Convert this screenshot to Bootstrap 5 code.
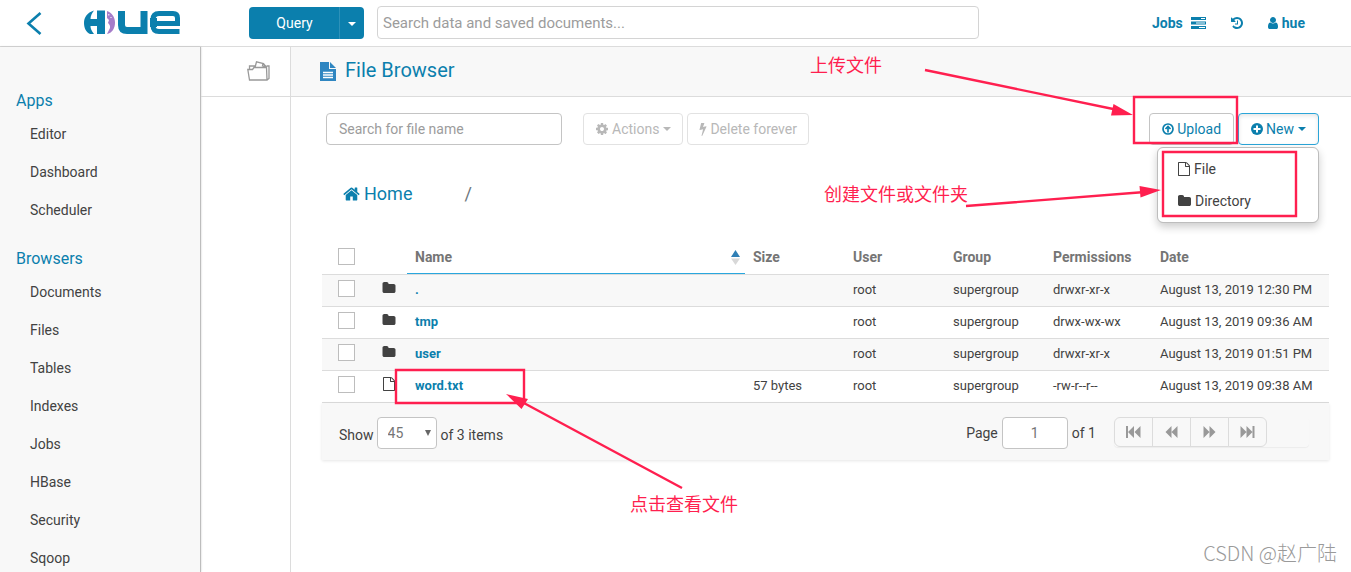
<!DOCTYPE html>
<html lang="en">
<head>
<meta charset="utf-8">
<meta name="viewport" content="width=device-width, initial-scale=1">
<title>Hue - File Browser</title>
<link href="https://cdn.jsdelivr.net/npm/bootstrap@5.3.0/dist/css/bootstrap.min.css" rel="stylesheet">
<style>
  :root { --hue: #0b7fad; --line: #dcdcdc; --soft: #f8f8f8; --ink: #424242; --pin: #ff1f4f; }
  body { font-family: Roboto, "Noto Sans CJK SC", sans-serif; font-size: 14px; line-height: 20px; color: var(--ink); background: #fff; }
  a { color: var(--hue); text-decoration: none; }
  svg { flex: none; }
  .fa { width: 14px; height: 14px; fill: currentColor; }
  .shell { height: 100vh; position: relative; overflow: hidden; }
  .topbar { height: 47px; border-bottom: 1px solid var(--line); padding-right: 46px; }
  .back-link { margin-left: 26px; }
  .brand-link { margin-left: 42px; }
  .query-group { margin-left: 68px; width: 115px; }
  .query-group .btn { background: var(--hue); color: #fff; border: 0; height: 32px; font-size: 14px; line-height: 20px; border-radius: 4px; padding: 0; }
  .query-group .btn + .btn { flex: 0 0 25px; border-left: 1px solid #2d91b9; }
  .form-control, .form-select { font-size: 14px; line-height: 20px; height: 32px; border: 1px solid #c4c4c4; border-radius: 4px; color: #757575; background-color: #fff; }
  .form-control::placeholder { color: #9c9c9c; opacity: 1; }
  .global-search { width: 602px; margin-left: 13px; height: 33px; border-color: #d4d4d4; padding: 0 5px; font-size: 15px; }
  .user-links { font-weight: 700; }
  .side { flex: 0 0 201px; background: var(--soft); border-right: 1px solid #bdbdbd; box-shadow: 0 0 2px rgba(0,0,0,.2); padding-top: 24px; overflow: hidden; }
  .side h2 { font-size: 16px; line-height: 28px; font-weight: 400; color: var(--hue); margin: 16px 0 0; padding-left: 16px; }
  .side .nav-link { color: var(--ink); padding: 0 0 0 30px; line-height: 38px; }
  .assist { flex: 0 0 90px; border-right: 1px solid var(--line); }
  .strip { height: 50px; border-bottom: 1px solid var(--line); }
  .page-title { font-size: 20px; line-height: 24px; font-weight: 400; color: var(--hue); padding: 0 0 3px 28px; background: var(--soft); }
  .toolbar { padding: 16px 32px 0 35px; }
  .file-search { width: 236px; padding: 0 12px; margin-right: 21px; }
  .btn-plain { height: 32px; border: 1px solid #c4c4c4; border-radius: 4px; background: #fff; color: var(--hue); font-size: 14px; line-height: 20px; padding: 0 12px; display: inline-flex; align-items: center; gap: 3px; }
  .btn-plain:disabled { color: #b8b8b8; border-color: #e2e2e2; background: #fff; opacity: 1; padding: 0 11px; }
  .btn-plain.open { border-color: #2ba5d8; box-shadow: inset 0 2px 4px rgba(0,0,0,.1); }
  .dropdown-toggle::after { margin-left: 1px; vertical-align: middle; border-width: 4px 4px 0; }
  .new-menu { width: 162px; min-width: 0; right: 0; top: 34px; padding: 5px 0; font-size: 14px; border: 1px solid #bdbdbd; border-radius: 6px; box-shadow: 0 4px 9px rgba(0,0,0,.2); }
  .new-menu .dropdown-item { padding: 0 20px; line-height: 32px; color: var(--ink); gap: 4px; }
  .crumbs { font-size: 18px; line-height: 26px; padding: 36px 0 0 52px; }
  .files { margin: 33px 22px 0 31px; }
  .grid { table-layout: fixed; margin: 0; color: var(--ink); font-size: 13px; line-height: 20px; }
  .grid th, .grid td { padding: 5px 8px 6px; height: 32px; border-bottom: 1px solid var(--line); background: transparent; box-shadow: none; white-space: nowrap; color: inherit; }
  .grid th { height: 35px; padding: 7px 8px; font-size: 14px; font-weight: 700; color: #757575; }
  .grid tbody tr:nth-child(odd) { background: var(--soft); }
  .grid .pick { padding-left: 16px; }
  .grid th.pick { padding-bottom: 9px; padding-top: 6px; }
  .grid td .fa { display: block; margin: 1px 0 3px; }
  .grid td:nth-child(2) { padding-left: 7px; padding-right: 0; }
  .grid td a { font-weight: 700; }
  .grid .sorted { box-shadow: inset 0 -1px 0 #29a7de; padding-right: 5px; }
  .tick { appearance: none; display: block; width: 17px; height: 17px; margin: 0; border: 1px solid #bdbdbd; background: #fff; }
  .foot { background: var(--soft); padding: 14px 20px 11px 17px; box-shadow: 0 1px 3px rgba(0,0,0,.1); }
  .size-select { width: 60px; padding: 0 10px; appearance: none; background-image: none; }
  .size-box { position: relative; margin: 0 4px 0 3px; }
  .size-box svg { position: absolute; right: 6px; top: 13px; pointer-events: none; }
  .page-input { width: 66px; text-align: center; margin: 0 4px; }
  .pager { width: 195px; margin-left: 18px; box-shadow: 0 1px 1px rgba(0,0,0,.05); border-radius: 4px; }
  .pager .page-link { width: 39px; height: 30px; padding: 0; display: flex; align-items: center; justify-content: center; background: var(--soft); color: #999; border: 1px solid var(--line); }
  .notes { position: absolute; right: 0; top: 0; pointer-events: none; z-index: 2000; font-family: "Noto Sans CJK SC", sans-serif; }
  .watermark { position: absolute; right: 14px; bottom: 5px; font: 20px/28px "Noto Sans CJK SC", sans-serif; font-weight: 300; color: #9a9a9a; text-shadow: -1px -1px 0 #fff; }
</style>
</head>
<body>
<svg class="d-none" xmlns="http://www.w3.org/2000/svg">
  <symbol id="folder" viewBox="0 0 1792 1792"><path d="M1728 608v704q0 92-66 158t-158 66h-1216q-92 0-158-66t-66-158v-960q0-92 66-158t158-66h320q92 0 158 66t66 158v32h672q92 0 158 66t66 158z"/></symbol>
  <symbol id="file" viewBox="0 0 1792 1792"><path d="M1596 380q28 28 48 76t20 88v1152q0 40-28 68t-68 28h-1344q-40 0-68-28t-28-68v-1600q0-40 28-68t68-28h896q40 0 88 20t76 48zm-444-244v376h376q-10-29-22-41l-313-313q-12-12-41-22zm384 1528v-1024h-416q-40 0-68-28t-28-68v-416h-768v1536h1280z"/></symbol>
</svg>
<div class="shell d-flex flex-column">
  <header class="topbar d-flex align-items-center">
    <a href="#" class="back-link d-flex" aria-label="Back"><svg width="16" height="24" viewBox="0 0 16 24" fill="none" stroke="#0b7fad" stroke-width="2.6"><path d="M14.500 2 2.500 12.500 14.500 23"/></svg></a>
    <a href="#" class="brand-link d-flex" aria-label="Hue">
      <svg width="97" height="26" viewBox="0 0 97 26">
        <path fill="#0b7fad" d="M10 .5C3 2.500 0 7.500 0 13c0 5 2 9 6 11h4c-2.500-3-3.500-5.500-3.500-8H13v8h8V.5h-8V9H6.500c0-3 1.500-6 3.500-8.500z"/>
        <path fill="#a57cc9" d="M23 1c5 2 8 6 8 11.500 0 6-3 10.500-8 11.500l2-4c2-3 1-5-1-7l1-3-2-2z"/>
        <path fill="#fff" d="M24.300 4h1v1.500h-1zM26.500 7h1v1h-1z"/>
        <g fill="none" stroke="#0b7fad"><path stroke-width="7" d="M37.500 1v14q0 5.500 5.500 5.500H60V1"/>
        <path stroke-width="5" d="M93 24v-2.500H75q-6 0-6-6V9.500q0-6 6-6h14q4.500 0 4.500 4.500v5.500H69"/><path stroke-width="7" d="M69.500 8v9"/></g>
      </svg>
    </a>
    <div class="query-group btn-group">
      <button class="btn" type="button">Query</button>
      <button class="btn dropdown-toggle" type="button" aria-label="Query type"></button>
    </div>
    <input class="form-control global-search" type="text" aria-label="Search" placeholder="Search data and saved documents...">
    <nav class="user-links ms-auto d-flex align-items-center">
      <a href="#" class="d-flex align-items-center gap-2 me-4">Jobs
        <svg width="15" height="12" viewBox="0 0 15 12"><path fill="#0b7fad" d="M0 0h15v3H0zM0 4.500h15v3H0zM0 9h15v3H0z"/><path stroke="#fff" d="M10 1.500h4M5 6h9M8 10.500h6"/></svg></a>
      <a href="#" class="d-flex me-4" aria-label="History"><svg class="fa" viewBox="0 0 1792 1792"><path d="M1664 896q0 156-61 298t-164 245-245 164-298 61q-172 0-327-72.500t-264-204.500q-7-10-6.500-22.500t8.500-20.500l137-138q10-9 25-9 16 2 23 12 73 95 179 147t225 52q104 0 198.500-40.500t163.500-109.500 109.500-163.500 40.500-198.500-40.500-198.500-109.500-163.500-163.500-109.500-198.500-40.500q-98 0-188 35.500t-160 101.500l137 138q31 30 14 69-17 40-59 40h-448q-26 0-45-19t-19-45v-448q0-42 40-59 39-17 69 14l130 129q107-101 244.500-156.500t284.500-55.500q156 0 298 61t245 164 164 245 61 298zm-640-288v448q0 14-9 23t-23 9h-320q-14 0-23-9t-9-23v-64q0-14 9-23t23-9h224v-352q0-14 9-23t23-9h64q14 0 23 9t9 23z"/></svg></a>
      <a href="#" class="d-flex align-items-center gap-1"><svg width="10" height="14" viewBox="256 0 1280 1792" fill="currentColor"><path d="M1536 1399q0 109-62.500 187t-150.500 78h-854q-88 0-150.500-78t-62.500-187q0-85 8.500-160.500t31.500-152 58.500-131 94-89 134.500-34.500q131 128 313 128t313-128q76 0 134.500 34.500t94 89 58.500 131 31.500 152 8.500 160.500zm-256-887q0 159-112.500 271.500t-271.500 112.500-271.500-112.500-112.500-271.500 112.500-271.500 271.500-112.500 271.500 112.500 112.500 271.500z"/></svg>hue</a>
    </nav>
  </header>
  <div class="d-flex flex-grow-1" style="min-height:0">
    <aside class="side">
      <h2>Apps</h2>
      <nav class="nav flex-column flex-nowrap">
        <a class="nav-link" href="#">Editor</a><a class="nav-link" href="#">Dashboard</a><a class="nav-link" href="#">Scheduler</a>
      </nav>
      <h2>Browsers</h2>
      <nav class="nav flex-column flex-nowrap">
        <a class="nav-link" href="#">Documents</a><a class="nav-link" href="#">Files</a><a class="nav-link" href="#">Tables</a><a class="nav-link" href="#">Indexes</a><a class="nav-link" href="#">Jobs</a><a class="nav-link" href="#">HBase</a><a class="nav-link" href="#">Security</a><a class="nav-link" href="#">Sqoop</a>
      </nav>
    </aside>
    <div class="assist">
      <div class="strip d-flex align-items-center justify-content-end pe-3">
        <a href="#" class="d-flex me-1" aria-label="Documents"><svg width="23" height="20" viewBox="0 0 23 20" fill="none" stroke="#999" stroke-width="1.300"><path d="M2.500 19 .8 8.500h4.700l1.500-2h12.500L20 19zM2.500 8V5h5l1 1.500M20 19l2-1.500V5h-2.500M8 6.500 9.500.8l7 1.700 2.300 2.800-.3 1.200M16 2.500l-.5 2.300 3.200.7"/></svg></a>
      </div>
    </div>
    <main class="flex-grow-1" style="min-width:0">
      <h1 class="strip page-title d-flex align-items-center gap-2 mb-0">
        <svg class="mt-1" width="18" height="19" viewBox="0 0 18 19"><path fill="#2f86c1" d="M1 0h9v7h7v12H1zM11 0l6 6h-6z"/><path stroke="#fff" stroke-width="1.300" d="M4 10.500h10M4 13h10M4 15.500h10"/></svg>File Browser</h1>
      <div class="toolbar d-flex">
        <input class="form-control file-search" type="text" aria-label="File name" placeholder="Search for file name">
        <button class="btn-plain me-1 dropdown-toggle" type="button" disabled><svg class="fa" viewBox="0 0 1792 1792"><path d="M1152 896q0-106-75-181t-181-75-181 75-75 181 75 181 181 75 181-75 75-181zm512-109v222q0 12-8 23t-20 13l-185 28q-19 54-39 91 35 50 107 138 10 12 10 25t-9 23q-27 37-99 108t-94 71q-12 0-26-9l-138-108q-44 23-91 38-16 136-29 186-7 28-36 28h-222q-14 0-24.500-8.500t-11.500-21.500l-28-184q-49-16-90-37l-141 107q-10 9-25 9-14 0-25-11-126-114-165-168-7-10-7-23 0-12 8-23 15-21 51-66.500t54-70.500q-27-50-41-99l-183-27q-13-2-21-12.500t-8-23.500v-222q0-12 8-23t19-13l186-28q14-46 39-92-40-57-107-138-10-12-10-24 0-10 9-23 26-36 98.500-107.500t94.500-71.500q13 0 26 10l138 107q44-23 91-38 16-136 29-186 7-28 36-28h222q14 0 24.500 8.500t11.500 21.500l28 184q49 16 90 37l142-107q9-9 24-9 13 0 25 10 129 119 165 170 7 8 7 22 0 12-8 23-15 21-51 66.500t-54 70.500q26 50 41 98l183 28q13 2 21 12.500t8 23.500z"/></svg>Actions</button>
        <button class="btn-plain" type="button" disabled><svg width="8" height="14" viewBox="448 0 896 1792" fill="currentColor"><path d="M1333 566q18 20 7 44l-540 1157q-13 25-42 25-4 0-14-2-17-5-25.500-19t-4.500-30l197-808-406 101q-4 1-12 1-18 0-31-11-18-15-13-39l201-825q4-14 16-23t28-9h328q19 0 32 12.500t13 29.500q0 8-5 18l-171 463 396-98q8-2 12-2 19 0 34 15z"/></svg>Delete forever</button>
        <button class="btn-plain ms-auto" type="button"><svg width="12" height="12" viewBox="0 0 12 12" fill="none" stroke="currentColor" stroke-width="1.700"><circle cx="6" cy="6" r="5"/><path d="M6 9.500V4M3.500 6 6 3.500 8.500 6"/></svg>Upload</button>
        <div class="dropdown ms-1">
          <button class="btn-plain open dropdown-toggle" type="button" aria-expanded="true"><svg width="12" height="12" viewBox="0 0 12 12"><circle cx="6" cy="6" r="6" fill="currentColor"/><path stroke="#fff" stroke-width="2" d="M6 2.500v7M2.500 6h7"/></svg>New</button>
          <div class="dropdown-menu show new-menu">
            <a class="dropdown-item d-flex align-items-center" href="#"><svg width="12" height="14" viewBox="128 0 1536 1792" fill="currentColor"><use href="#file" width="1792" height="1792"/></svg>File</a>
            <a class="dropdown-item d-flex align-items-center" href="#"><svg width="13" height="14" viewBox="64 0 1664 1792" fill="currentColor"><use href="#folder" width="1792" height="1792"/></svg>Directory</a>
          </div>
        </div>
      </div>
      <nav class="crumbs d-flex" aria-label="Path">
        <a href="#" class="d-flex align-items-center gap-1 me-5"><svg width="17" height="18" viewBox="64 0 1664 1792" fill="currentColor"><path d="M1472 992v480q0 26-19 45t-45 19h-384v-384h-256v384h-384q-26 0-45-19t-19-45v-480q0-1 .5-3t.5-3l575-474 575 474q1 2 1 6zm223-69l-62 74q-8 9-21 11h-3q-13 0-21-7l-692-577-692 577q-12 8-24 7-13-2-21-11l-62-74q-8-10-7-23.500t11-21.500l719-599q32-26 76-26t76 26l244 204v-195q0-14 9-23t23-9h192q14 0 23 9t9 23v408l219 182q10 8 11 21.500t-7 23.500z"/></svg>Home</a>
        <span class="ms-1 text-secondary">/</span>
      </nav>
      <section class="files">
        <table class="table grid">
          <colgroup><col style="width:53px"><col style="width:32px"><col><col style="width:100px"><col style="width:100px"><col style="width:100px"><col style="width:107px"><col style="width:177px"></colgroup>
          <thead><tr><th class="pick"><input class="tick" type="checkbox" aria-label="Select all"></th><th></th>
            <th class="sorted"><div class="d-flex justify-content-between align-items-center">Name<svg width="9" height="15" viewBox="0 0 9 15"><path fill="#2f7fb5" d="M0 7 4.500 0 9 7z"/><path fill="#d8d8d8" d="M0 8.500h9L4.500 15z"/></svg></div></th>
            <th>Size</th><th>User</th><th>Group</th><th>Permissions</th><th>Date</th></tr></thead>
          <tbody>
            <tr><td class="pick"><input class="tick" type="checkbox" aria-label="Select ."></td><td><svg class="fa"><use href="#folder"/></svg></td><td><a href="#">.</a></td><td></td><td>root</td><td>supergroup</td><td>drwxr-xr-x</td><td>August 13, 2019 12:30 PM</td></tr>
            <tr><td class="pick"><input class="tick" type="checkbox" aria-label="Select tmp"></td><td><svg class="fa"><use href="#folder"/></svg></td><td><a href="#">tmp</a></td><td></td><td>root</td><td>supergroup</td><td>drwx-wx-wx</td><td>August 13, 2019 09:36 AM</td></tr>
            <tr><td class="pick"><input class="tick" type="checkbox" aria-label="Select user"></td><td><svg class="fa"><use href="#folder"/></svg></td><td><a href="#">user</a></td><td></td><td>root</td><td>supergroup</td><td>drwxr-xr-x</td><td>August 13, 2019 01:51 PM</td></tr>
            <tr><td class="pick"><input class="tick" type="checkbox" aria-label="Select word.txt"></td><td><svg class="fa"><use href="#file"/></svg></td><td><a href="#">word.txt</a></td><td>57 bytes</td><td>root</td><td>supergroup</td><td>-rw-r--r--</td><td>August 13, 2019 09:38 AM</td></tr>
          </tbody>
        </table>
        <div class="foot d-flex align-items-start">
          <div class="d-flex align-items-center"><label for="size" class="pt-1">Show</label>
            <div class="size-box"><select id="size" class="form-select size-select"><option>45</option></select><svg width="6" height="6"><path fill="#666" d="M0 0h6L3 6z"/></svg></div>
            <span class="pt-1">of 3 items</span></div>
          <div class="d-flex align-items-center ms-auto"><label for="page">Page</label><input id="page" class="form-control page-input" type="text" value="1"><span>of 1</span></div>
          <ul class="pagination pager mb-0">
            <li class="page-item"><a class="page-link" href="#" aria-label="First"><svg width="15" height="12" fill="currentColor"><path d="M0 0h2v12H0zM8 0v12L2 6zM14.500 0v12l-6-6z"/></svg></a></li>
            <li class="page-item"><a class="page-link" href="#" aria-label="Previous"><svg width="13" height="12" fill="currentColor"><path d="M6.500 0v12L.5 6zM12.500 0v12l-6-6z"/></svg></a></li>
            <li class="page-item"><a class="page-link" href="#" aria-label="Next"><svg width="13" height="12" fill="currentColor"><path d="M.5 0v12l6-6zM6.500 0v12l6-6z"/></svg></a></li>
            <li class="page-item"><a class="page-link" href="#" aria-label="Last"><svg width="15" height="12" fill="currentColor"><path d="M.5 0v12l6-6zM6.500 0v12l6-6zM12.500 0h2v12h-2z"/></svg></a></li>
          </ul>
        </div>
      </section>
    </main>
  </div>
  <svg class="notes" width="1351" height="572" viewBox="0 0 1351 572">
    <g fill="none" stroke="#ff1f4f" stroke-width="2.400">
      <path d="M1134 97h103v46h-103zM1163 152h133v64h-133zM396 370h128v33H396z"/>
      <path d="M925 70 1118 110M966 206 1145 192M682 488 522 402"/>
    </g>
    <path fill="#ff1f4f" d="M1133 115 1111 115.500 1113.500 104zM1161 190 1140.500 197.500 1139.500 186zM506 394 528 399 521.500 409z"/>
    <g fill="#ff1f4f" font-size="18"><text x="810" y="72">上传文件</text><text x="824" y="201">创建文件或文件夹</text><text x="630" y="511">点击查看文件</text></g>
  </svg>
  <div class="watermark">CSDN @赵广陆</div>
</div>
<script src="https://cdn.jsdelivr.net/npm/bootstrap@5.3.0/dist/js/bootstrap.bundle.min.js"></script>
</body>
</html>
